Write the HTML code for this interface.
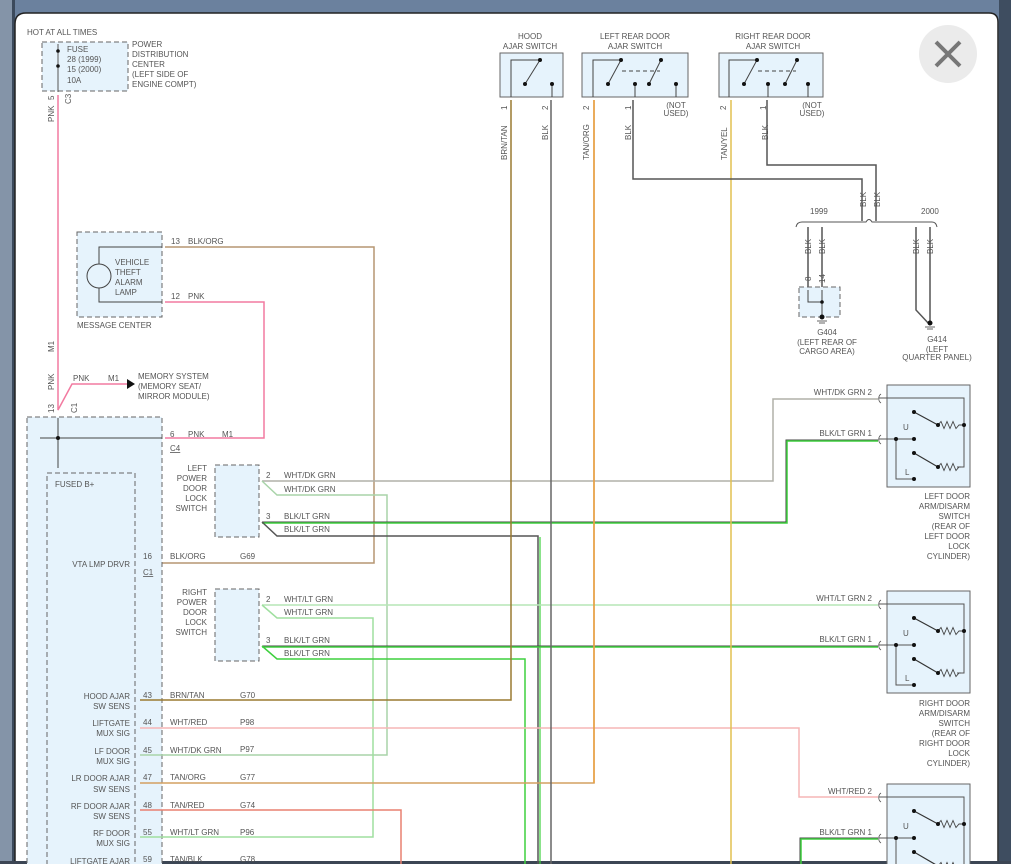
<!DOCTYPE html>
<html><head><meta charset="utf-8"><style>
html,body{margin:0;padding:0;width:1011px;height:864px;overflow:hidden;background:#6b819e;}
svg{display:block}
text{font-family:"Liberation Sans",sans-serif;font-size:8px;fill:#555;}
</style></head><body>
<svg width="1011" height="864" viewBox="0 0 1011 864" xmlns="http://www.w3.org/2000/svg">
<defs>
<g id="dsw">
<rect x="0" y="0" width="83" height="102" fill="#e6f3fc" stroke="#666" stroke-width="1"/>
<path d="M-8 13 H77 V40 M77 40 V82 H70" fill="none" stroke="#555" stroke-width="1"/>
<path d="M-8 54 H27 M9 54 V94 H27" fill="none" stroke="#555" stroke-width="1"/>
<path d="M27 27 L51 40 M27 68 L51 82" stroke="#333" stroke-width="1.2"/>
<path d="M51 40 l3 -3.5 l3 7 l3 -7 l3 7 l3 -7 l3 7 l3 -3.5 h5 M51 82 l3 -3.5 l3 7 l3 -7 l3 7 l3 -7 l3 7 l3 -3.5 h2" fill="none" stroke="#444" stroke-width="0.9"/>
<g fill="#111"><circle cx="27" cy="27" r="2"/><circle cx="51" cy="40" r="2"/><circle cx="77" cy="40" r="2"/><circle cx="27" cy="68" r="2"/><circle cx="51" cy="82" r="2"/><circle cx="27" cy="54" r="2"/><circle cx="9" cy="54" r="2"/><circle cx="27" cy="94" r="2"/></g>
<path d="M-6 13 a4 5 0 0 0 0 9 M-6 54 a4 5 0 0 0 0 9" fill="none" stroke="#555" stroke-width="0.8" transform="translate(0,-4)"/>
<text x="16" y="45">U</text><text x="18" y="90">L</text>
</g>
</defs>
<rect x="0" y="0" width="14" height="864" fill="#8494a8"/>
<rect x="12" y="0" width="3" height="864" fill="#3c4a5c"/>
<path d="M15 864 V24 Q15 13 26 13 H989 Q998 13 998 22 V864 Z" fill="#fff" stroke="#222" stroke-width="1.5"/>
<rect x="999" y="0" width="12" height="864" fill="#3e4d60"/>
<rect x="0" y="861" width="1011" height="3" fill="#3c4654"/>

<circle cx="948" cy="54" r="29" fill="#ebebeb"/>
<path d="M936 42 L960 66 M960 42 L936 66" stroke="#777" stroke-width="4"/>

<text x="27" y="35">HOT AT ALL TIMES</text>
<rect x="42" y="42" width="86" height="49" fill="#e6f3fc" stroke="#666" stroke-dasharray="5,3"/>
<path d="M58 44 V92" stroke="#555"/>
<circle cx="58" cy="51" r="1.8" fill="#111"/><circle cx="58" cy="66" r="1.8" fill="#111"/>
<text x="67" y="52">FUSE</text><text x="67" y="62">28   (1999)</text><text x="67" y="72">15   (2000)</text><text x="67" y="83">10A</text>
<text x="132" y="47">POWER</text><text x="132" y="57">DISTRIBUTION</text><text x="132" y="67">CENTER</text><text x="132" y="77">(LEFT SIDE OF</text><text x="132" y="87">ENGINE COMPT)</text>
<text transform="translate(54,100) rotate(-90)">5</text>
<text transform="translate(54,122) rotate(-90)">PNK</text>
<text transform="translate(71,104) rotate(-90)">C3</text>
<path d="M58 95 V410 L72 384 H128" fill="none" stroke="#f27aa0" stroke-width="1.5"/>
<path d="M127 379 L135 384 L127 389 Z" fill="#111"/>
<text transform="translate(54,352) rotate(-90)">M1</text>
<text transform="translate(54,390) rotate(-90)">PNK</text>
<text transform="translate(54,413) rotate(-90)">13</text>
<text transform="translate(77,413) rotate(-90)">C1</text>
<text x="73" y="381">PNK</text><text x="108" y="381">M1</text>
<text x="138" y="379">MEMORY SYSTEM</text><text x="138" y="389">(MEMORY SEAT/</text><text x="138" y="399">MIRROR MODULE)</text>

<rect x="77" y="232" width="85" height="85" fill="#e6f3fc" stroke="#666" stroke-dasharray="5,3"/>
<circle cx="99" cy="276" r="12" fill="none" stroke="#444"/>
<path d="M99 264 V247 H162 M99 288 V302 H162" fill="none" stroke="#444"/>
<text x="115" y="265">VEHICLE</text><text x="115" y="275">THEFT</text><text x="115" y="285">ALARM</text><text x="115" y="295">LAMP</text>
<text x="77" y="328">MESSAGE CENTER</text>
<path d="M165 247 H374 V563 H140" fill="none" stroke="#b59572" stroke-width="1.5"/>
<text x="171" y="244">13</text><text x="188" y="244">BLK/ORG</text>
<path d="M165 302 H264 V438 H165" fill="none" stroke="#f27aa0" stroke-width="1.5"/>
<text x="171" y="299">12</text><text x="188" y="299">PNK</text>

<rect x="27" y="417" width="135" height="460" fill="#e6f3fc" stroke="#666" stroke-dasharray="5,3"/>
<rect x="47" y="473" width="88" height="400" fill="#e6f3fc" stroke="#666" stroke-dasharray="5,3"/>
<path d="M40 438 H162 M58 418 V468" stroke="#444"/>
<circle cx="58" cy="438" r="2" fill="#111"/>
<text x="55" y="487">FUSED B+</text>
<text x="170" y="437">6</text><text x="188" y="437">PNK</text><text x="222" y="437">M1</text>
<text x="170" y="451" text-decoration="underline">C4</text>

<g text-anchor="end"><text x="207" y="471">LEFT</text><text x="207" y="481">POWER</text><text x="207" y="491">DOOR</text><text x="207" y="501">LOCK</text><text x="207" y="511">SWITCH</text>
<text x="207" y="595">RIGHT</text><text x="207" y="605">POWER</text><text x="207" y="615">DOOR</text><text x="207" y="625">LOCK</text><text x="207" y="635">SWITCH</text></g>
<rect x="215" y="465" width="44" height="72" fill="#e6f3fc" stroke="#666" stroke-dasharray="5,3"/>
<rect x="215" y="589" width="44" height="72" fill="#e6f3fc" stroke="#666" stroke-dasharray="5,3"/>
<text x="266" y="478">2</text><text x="284" y="478">WHT/DK GRN</text><text x="284" y="492">WHT/DK GRN</text>
<text x="266" y="519">3</text><text x="284" y="519">BLK/LT GRN</text><text x="284" y="532">BLK/LT GRN</text>
<text x="266" y="602">2</text><text x="284" y="602">WHT/LT GRN</text><text x="284" y="615">WHT/LT GRN</text>
<text x="266" y="643">3</text><text x="284" y="643">BLK/LT GRN</text><text x="284" y="656">BLK/LT GRN</text>

<path d="M262 481 H773 V399 H878" fill="none" stroke="#b0b0a8" stroke-width="1.5"/>
<path d="M262 481 L277 495 H387 V755 H140" fill="none" stroke="#a9d4a9" stroke-width="1.5"/>
<path d="M262 522 H786 V440 H878" fill="none" stroke="#444" stroke-width="1"/>
<path d="M262 523 H787 V441 H878" fill="none" stroke="#3ed03e" stroke-width="1.5"/>
<path d="M262 522 L277 536 H538 V864" fill="none" stroke="#555" stroke-width="1.5"/>
<path d="M540 537 V864" stroke="#3ed03e" stroke-width="1.2"/>
<path d="M262 605 H878" fill="none" stroke="#b5e6b5" stroke-width="1.5"/>
<path d="M262 605 L277 618 H373 V837 H140" fill="none" stroke="#9fdf9f" stroke-width="1.5"/>
<path d="M262 646 H878" stroke="#444" stroke-width="1"/>
<path d="M262 647 H878" stroke="#3ed03e" stroke-width="1.5"/>
<path d="M262 646 L277 659 H525 V864" fill="none" stroke="#3ed03e" stroke-width="1.5"/>

<text x="143" y="559">16</text><text x="170" y="559">BLK/ORG</text><text x="240" y="559">G69</text>
<text x="143" y="575" text-decoration="underline">C1</text>
<g text-anchor="end">
<text x="130" y="567">VTA LMP DRVR</text>
<text x="130" y="699">HOOD AJAR</text><text x="130" y="709">SW SENS</text>
<text x="130" y="726">LIFTGATE</text><text x="130" y="736">MUX SIG</text>
<text x="130" y="754">LF DOOR</text><text x="130" y="764">MUX SIG</text>
<text x="130" y="781">LR DOOR AJAR</text><text x="130" y="792">SW SENS</text>
<text x="130" y="809">RF DOOR AJAR</text><text x="130" y="819">SW SENS</text>
<text x="130" y="836">RF DOOR</text><text x="130" y="846">MUX SIG</text>
<text x="130" y="864">LIFTGATE AJAR</text>
</g>
<text x="143" y="698">43</text><text x="170" y="698">BRN/TAN</text><text x="240" y="698">G70</text>
<text x="143" y="725">44</text><text x="170" y="725">WHT/RED</text><text x="240" y="725">P98</text>
<text x="143" y="753">45</text><text x="170" y="753">WHT/DK GRN</text><text x="240" y="752">P97</text>
<text x="143" y="780">47</text><text x="170" y="780">TAN/ORG</text><text x="240" y="780">G77</text>
<text x="143" y="808">48</text><text x="170" y="808">TAN/RED</text><text x="240" y="808">G74</text>
<text x="143" y="835">55</text><text x="170" y="835">WHT/LT GRN</text><text x="240" y="835">P96</text>
<text x="143" y="862">59</text><text x="170" y="862">TAN/BLK</text><text x="240" y="862">G78</text>
<path d="M140 700 H511 V100" fill="none" stroke="#9a7a30" stroke-width="1.5"/>
<path d="M140 728 H799 V797 H878" fill="none" stroke="#f5b5b5" stroke-width="1.5"/>
<path d="M140 783 H594 V100" fill="none" stroke="#d4a060" stroke-width="1.5"/>
<path d="M594 783 V100" stroke="#eaa040" stroke-width="1.5"/>
<path d="M140 810 H401 V864" fill="none" stroke="#e88070" stroke-width="1.5"/>
<path d="M551 100 V864" stroke="#666" stroke-width="1.5"/>
<path d="M731 100 V864" stroke="#e2c050" stroke-width="1.5"/>

<g text-anchor="middle"><text x="530" y="39">HOOD</text><text x="530" y="49">AJAR SWITCH</text>
<text x="635" y="39">LEFT REAR DOOR</text><text x="635" y="49">AJAR SWITCH</text>
<text x="773" y="39">RIGHT REAR DOOR</text><text x="773" y="49">AJAR SWITCH</text></g>
<rect x="500" y="53" width="63" height="44" fill="#e6f3fc" stroke="#666"/>
<rect x="582" y="53" width="106" height="44" fill="#e6f3fc" stroke="#666"/>
<rect x="719" y="53" width="104" height="44" fill="#e6f3fc" stroke="#666"/>
<g stroke="#444" fill="none">
<path d="M511 97 V60 H540 L525 84 M552 84 V97"/>
<path d="M593 97 V60 H621 L608 84 M661 60 L649 84 M635 84 V97 M676 84 V97"/>
<path d="M622 71 H660" stroke-dasharray="4,3"/>
<path d="M729 97 V60 H757 L744 84 M797 60 L785 84 M768 84 V97 M808 84 V97"/>
<path d="M758 71 H796" stroke-dasharray="4,3"/>
</g>
<g fill="#111"><circle cx="540" cy="60" r="2"/><circle cx="525" cy="84" r="2"/><circle cx="552" cy="84" r="2"/>
<circle cx="621" cy="60" r="2"/><circle cx="608" cy="84" r="2"/><circle cx="661" cy="60" r="2"/><circle cx="649" cy="84" r="2"/><circle cx="635" cy="84" r="2"/><circle cx="676" cy="84" r="2"/>
<circle cx="757" cy="60" r="2"/><circle cx="744" cy="84" r="2"/><circle cx="797" cy="60" r="2"/><circle cx="785" cy="84" r="2"/><circle cx="768" cy="84" r="2"/><circle cx="808" cy="84" r="2"/></g>
<text transform="translate(507,110) rotate(-90)">1</text><text transform="translate(548,110) rotate(-90)">2</text>
<text transform="translate(589,110) rotate(-90)">2</text><text transform="translate(631,110) rotate(-90)">1</text>
<text transform="translate(726,110) rotate(-90)">2</text><text transform="translate(766,110) rotate(-90)">1</text>
<g text-anchor="middle"><text x="676" y="108">(NOT</text><text x="676" y="116">USED)</text><text x="812" y="108">(NOT</text><text x="812" y="116">USED)</text></g>
<text transform="translate(507,160) rotate(-90)">BRN/TAN</text><text transform="translate(548,140) rotate(-90)">BLK</text>
<text transform="translate(589,160) rotate(-90)">TAN/ORG</text><text transform="translate(631,140) rotate(-90)">BLK</text>
<text transform="translate(727,160) rotate(-90)">TAN/YEL</text><text transform="translate(768,140) rotate(-90)">BLK</text>
<path d="M633 100 V179 H862 V221" fill="none" stroke="#555" stroke-width="1.5"/>
<path d="M767 100 V165 H876 V221" fill="none" stroke="#555" stroke-width="1.5"/>
<text transform="translate(866,207) rotate(-90)">BLK</text><text transform="translate(880,207) rotate(-90)">BLK</text>
<path d="M796 227 Q797 222 802 222 H866 Q869 217 872 222 H932 Q936 222 937 227" fill="none" stroke="#555"/>
<text x="810" y="214">1999</text><text x="921" y="214">2000</text>
<path d="M808 227 V290 M822 227 V290 M916 227 V310 L930 325 M930 227 V322" stroke="#555" stroke-width="1.5" fill="none"/>
<text transform="translate(811,254) rotate(-90)">BLK</text><text transform="translate(825,254) rotate(-90)">BLK</text>
<text transform="translate(919,254) rotate(-90)">BLK</text><text transform="translate(933,254) rotate(-90)">BLK</text>
<text transform="translate(811,281) rotate(-90)">8</text><text transform="translate(825,283) rotate(-90)">14</text>
<rect x="799" y="287" width="41" height="30" fill="#e6f3fc" stroke="#666" stroke-dasharray="5,3"/>
<path d="M808 290 V302 H822 M822 290 V317" stroke="#444" fill="none"/>
<circle cx="822" cy="302" r="1.8" fill="#111"/><circle cx="822" cy="317" r="2.5" fill="#111"/><circle cx="930" cy="323" r="2.5" fill="#111"/>
<path d="M817 321 H827 M819 323 H825 M925 327 H935 M927 329 H933" stroke="#666"/>
<g text-anchor="middle"><text x="827" y="335">G404</text><text x="827" y="345">(LEFT REAR OF</text><text x="827" y="354">CARGO AREA)</text>
<text x="937" y="342">G414</text><text x="937" y="352">(LEFT</text><text x="937" y="360">QUARTER PANEL)</text></g>

<use href="#dsw" x="887" y="385"/>
<use href="#dsw" x="887" y="591"/>
<use href="#dsw" x="887" y="784"/>
<g text-anchor="end">
<text x="872" y="395">WHT/DK GRN   2</text><text x="872" y="436">BLK/LT GRN   1</text>
<text x="872" y="601">WHT/LT GRN   2</text><text x="872" y="642">BLK/LT GRN   1</text>
<text x="872" y="794">WHT/RED   2</text><text x="872" y="835">BLK/LT GRN   1</text>
<text x="970" y="499">LEFT DOOR</text><text x="970" y="509">ARM/DISARM</text><text x="970" y="519">SWITCH</text><text x="970" y="529">(REAR OF</text><text x="970" y="539">LEFT DOOR</text><text x="970" y="549">LOCK</text><text x="970" y="559">CYLINDER)</text>
<text x="970" y="706">RIGHT DOOR</text><text x="970" y="716">ARM/DISARM</text><text x="970" y="726">SWITCH</text><text x="970" y="736">(REAR OF</text><text x="970" y="746">RIGHT DOOR</text><text x="970" y="756">LOCK</text><text x="970" y="766">CYLINDER)</text>
</g>
<path d="M800 864 V838 H878" fill="none" stroke="#444" stroke-width="1"/>
<path d="M801 864 V839 H878" fill="none" stroke="#3ed03e" stroke-width="1.5"/>
</svg>
</body></html>
